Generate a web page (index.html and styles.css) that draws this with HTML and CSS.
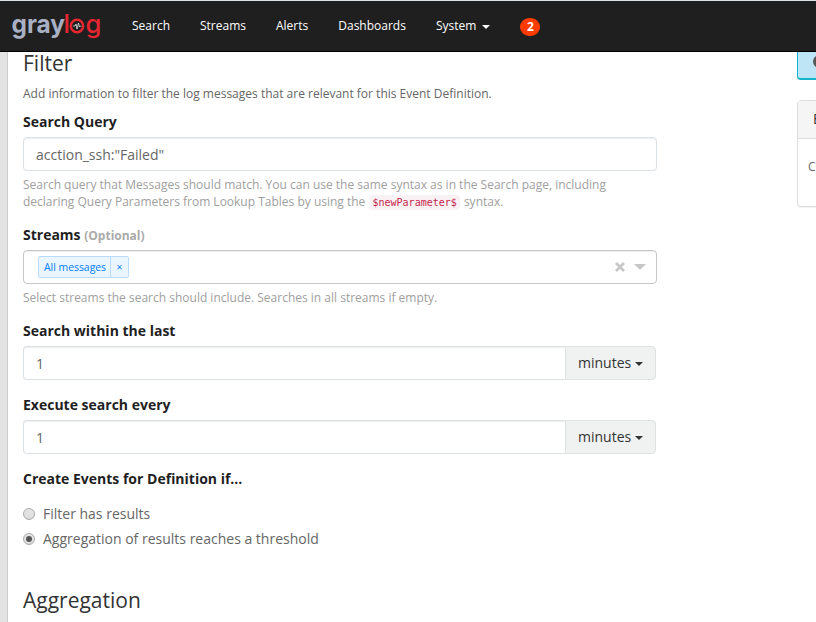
FILE: index.html
```html
<!DOCTYPE html>
<html lang="en">
<head>
<meta charset="utf-8">
<title>Graylog</title>
<link rel="stylesheet" href="styles.css">
</head>
<body>
<header class="navbar">
  <svg class="logo" width="92" height="34" viewBox="0 0 92 34">
    <text class="logo-gray" x="-0.500" y="24" textLength="53.500" lengthAdjust="spacingAndGlyphs">gray</text>
    <text class="logo-red" x="51.500" y="24">l</text>
    <circle cx="65" cy="17" r="6.200" class="logo-ring"/>
    <path d="M61 17h2l1-2 1 5 1.500-6 1 4 1-1h1" class="logo-pulse"/>
    <text class="logo-red" x="73.500" y="24">g</text>
  </svg>
  <nav class="menu">
    <a>Search</a>
    <a>Streams</a>
    <a>Alerts</a>
    <a>Dashboards</a>
    <a>System <i class="caret"></i></a>
  </nav>
  <span class="badge">2</span>
</header>
<div class="page">
  <main class="form">
    <h2>Filter</h2>
    <p class="intro">Add information to filter the log messages that are relevant for this Event Definition.</p>

    <section class="group query">
      <label>Search Query</label>
      <div class="control">acction_ssh:"Failed"</div>
      <p class="help">Search query that Messages should match. You can use the same syntax as in the Search page, including<br>declaring Query Parameters from Lookup Tables by using the <code>$newParameter$</code> syntax.</p>
    </section>

    <section class="group streams">
      <label>Streams <small>(Optional)</small></label>
      <div class="control select">
        <span class="tag"><span class="tag-name">All messages</span><span class="tag-remove">×</span></span>
        <svg class="clear" width="10" height="10" viewBox="0 0 10 10"><path d="M1 1l8 8M9 1l-8 8"/></svg>
        <i class="arrow"></i>
      </div>
      <p class="help">Select streams the search should include. Searches in all streams if empty.</p>
    </section>

    <section class="group timed">
      <label>Search within the last</label>
      <div class="input-group"><div class="control number">1</div><div class="unit">minutes<i class="caret"></i></div></div>
    </section>

    <section class="group timed">
      <label>Execute search every</label>
      <div class="input-group"><div class="control number">1</div><div class="unit">minutes<i class="caret"></i></div></div>
    </section>

    <section class="group conditions">
      <label>Create Events for Definition if...</label>
      <div class="option"><i class="radio"></i><span>Filter has results</span></div>
      <div class="option"><i class="radio checked"></i><span>Aggregation of results reaches a threshold</span></div>
    </section>

    <h2 class="aggregation">Aggregation</h2>
  </main>
  <aside class="side">
    <div class="notice"><i class="notice-icon"></i></div>
    <div class="panel">
      <div class="panel-head">E</div>
      <div class="panel-body">C</div>
    </div>
  </aside>
</div>
</body>
</html>
```

FILE: styles.css
```css
* { box-sizing: border-box; }
body {
  margin: 0;
  width: 816px;
  height: 622px;
  overflow: hidden;
  background: #fff;
  color: #666;
  font: 14px/20px "Open Sans", sans-serif;
}
h2, p { margin: 0; }
.navbar {
  display: flex;
  height: 52px;
  background: #1f1f1f;
  border-top: 1px solid #dce1e5;
  border-bottom: 1px solid #000;
}
.logo { display: block; margin: 8px 0 0 12px; flex: none; overflow: visible; }
.logo text { font: 700 25.500px Inter, sans-serif; }
.logo .logo-gray { fill: #a9b0c3; }
.logo .logo-red { fill: #e6252f; font-weight: 500; }
.logo-ring { fill: none; stroke: #e6252f; stroke-width: 2.500; }
.logo-pulse { fill: none; stroke: #e9e9ee; stroke-width: .8; }
.menu { display: flex; gap: 30px; margin-left: 28px; }
.menu a {
  color: #fff;
  font-size: 12px;
  line-height: 50px;
  white-space: nowrap;
}
.caret {
  display: inline-block;
  border: 4px solid transparent;
  border-top-color: currentColor;
  border-bottom: 0;
  vertical-align: middle;
  margin-left: 3px;
}
.badge {
  width: 20px;
  height: 18px;
  margin: 17px 0 0 30px;
  border-radius: 9px;
  background: #ff3b00;
  color: #fff;
  font-size: 12px;
  font-weight: 700;
  line-height: 18px;
  text-align: center;
}
.page {
  display: flex;
  height: 570px;
  border-left: 7px solid #e3e3e3;
}
.form {
  width: 791px;
  flex: none;
  padding-left: 15px;
  border-left: 1px solid #ccc;
}
h2 {
  height: 32px;
  color: #333;
  font-size: 21px;
  font-weight: 400;
  line-height: 22px;
}
.aggregation { padding-top: 1px; }
.intro { height: 28px; font-size: 12px; line-height: 20px; white-space: nowrap; }
.group { width: 634px; }
.group label {
  display: block;
  height: 25px;
  color: #1f1f1f;
  font-weight: 700;
  line-height: 20px;
  font-size: 14px;
}
.group small { color: #aaa; font-size: 12px; }
.control {
  height: 34px;
  padding: 0 12px;
  border: 1px solid #dce1e5;
  border-radius: 4px;
  box-shadow: inset 0 1px 1px rgba(0, 0, 0, .07);
  line-height: 34px;
}
.help {
  padding-top: 5px;
  color: #a0a0a0;
  font-size: 12px;
  line-height: 17px;
  white-space: nowrap;
}
.query { height: 113px; }
.streams { height: 96px; }
.timed { height: 74px; }
.help code {
  padding: 2px 3px;
  border-radius: 4px;
  background: #f9f2f4;
  color: #c7254e;
  font: 10px "DejaVu Sans Mono", monospace;
  margin: 0 1px 0 1px;
}
.select {
  display: flex;
  align-items: center;
  padding: 0 10px 0 14px;
  border-color: #c7c7c7;
}
.tag {
  display: flex;
  height: 22px;
  border: 1px solid #b8dcff;
  border-radius: 2px;
  background: #ebf5ff;
  color: #007eff;
  font-size: 10.400px;
  line-height: 20px;
}
.tag-name { width: 72px; padding-left: 5px; border-right: 1px solid #b8dcff; white-space: nowrap; }
.tag-remove { width: 17px; text-align: center; }
.clear { margin-left: auto; fill: none; stroke: #c7c7c7; stroke-width: 2.700; }
.arrow {
  margin-left: 9px;
  border: 6px solid transparent;
  border-top-color: #c7c7c7;
  border-bottom: 0;
}
.input-group { display: flex; width: 633px; }
.number { flex: 1; border-radius: 4px 0 0 4px; border-right: 0; }
.unit {
  width: 91px;
  height: 34px;
  padding-left: 12px;
  border: 1px solid #dfe1e1;
  border-radius: 0 4px 4px 0;
  background: #f0f2f1;
  color: #333;
  line-height: 32px;
}
.unit .caret { margin-left: 4px; }
.conditions { height: 119px; }
.conditions label { height: 32px; }
.option { display: flex; align-items: center; height: 25px; }
.radio {
  display: grid;
  place-items: center;
  width: 12px;
  height: 12px;
  margin-right: 8px;
  border: 1px solid #aaa;
  border-radius: 50%;
  background: linear-gradient(#e6e6e6, #dcdcdc);
}
.checked::after { content: ""; width: 6px; height: 6px; border-radius: 50%; background: #555; }
.side { width: 19px; flex: none; margin-left: -1px; overflow: hidden; }
.notice {
  width: 200px;
  height: 28px;
  padding: 3px 0 0 15px;
  border: 1px solid #14b4cd;
  border-top: 0;
  border-bottom-width: 2px;
  border-radius: 0 0 0 4px;
  background: #bde5f5;
}
.notice-icon { display: block; width: 13px; height: 13px; border-radius: 50%; background: #555; }
.panel {
  width: 200px;
  height: 107px;
  margin-top: 20px;
  border: 1px solid #ddd;
  border-radius: 4px;
  box-shadow: 0 1px 1px rgba(0, 0, 0, .05);
}
.panel-head {
  height: 38px;
  padding-left: 15px;
  border-bottom: 1px solid #ddd;
  background: #f5f5f5;
  color: #333;
  line-height: 36px;
}
.panel-body { padding: 18px 10px; font-size: 12px; }
```
